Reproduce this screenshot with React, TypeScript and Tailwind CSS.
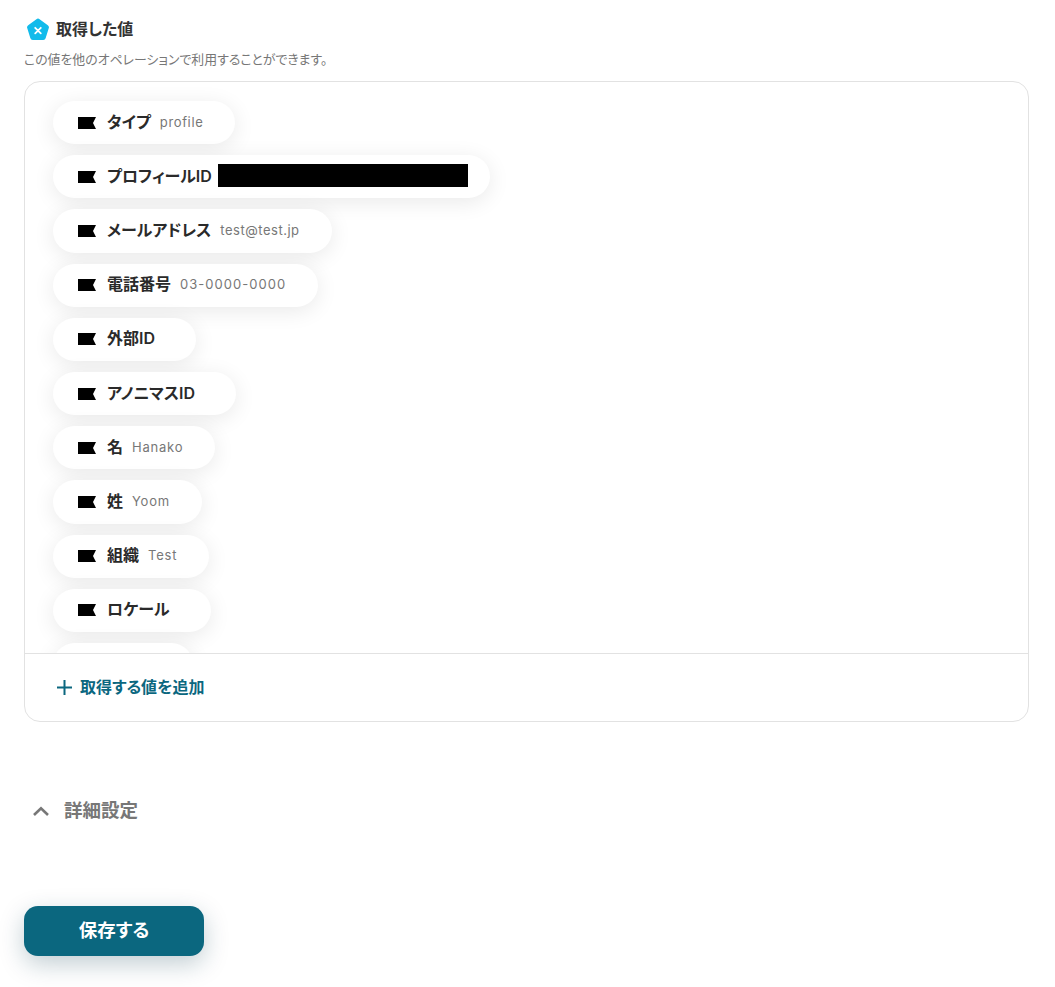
import React from 'react';

const items = [
  { label: 'タイプ', value: 'profile', track: 'tracking-[0.05em]' },
  { label: 'プロフィールID', masked: true },
  { label: 'メールアドレス', value: 'test@test.jp', track: 'tracking-[0.04em]' },
  { label: '電話番号', value: '03-0000-0000', track: 'tracking-[0.08em]' },
  { label: '外部ID' },
  { label: 'アノニマスID' },
  { label: '名', value: 'Hanako', track: 'tracking-[0.06em]' },
  { label: '姓', value: 'Yoom', track: 'tracking-[0.06em]' },
  { label: '組織', value: 'Test', track: 'tracking-[0.06em]' },
  { label: 'ロケール' },
];

const TagIcon = () => (
  <svg width="18" height="12" viewBox="0 0 18 12" className="shrink-0">
    <path d="M0 0H18L15 6L18 12H0Z" fill="#000" />
  </svg>
);

const LogoIcon = () => (
  <svg width="24" height="24" viewBox="0 0 24 24" className="shrink-0">
    <path
      d="M10.4 1.2a2.6 2.6 0 0 1 3.2 0l8.2 6a2.6 2.6 0 0 1 1 2.9l-3.1 10a2.6 2.6 0 0 1-2.5 1.9H6.8a2.6 2.6 0 0 1-2.5-1.9l-3.1-10a2.6 2.6 0 0 1 1-2.9Z"
      fill="#12bbeb"
    />
    <path d="M9.2 9.8 14.8 15.4M14.8 9.8 9.2 15.4" stroke="#fff" strokeWidth="1.8" strokeLinecap="round" />
  </svg>
);

const App = () => {
  return (
    <div className="w-[1055px] h-[987px] bg-white overflow-hidden pl-6 pr-[26px] font-['Inter','Noto_Sans_CJK_JP',sans-serif] [font-feature-settings:'palt']">
      <div className="flex items-center gap-[6px] pt-[18px] h-[42px] pl-[2px]">
        <LogoIcon />
        <h2 className="text-base font-semibold text-[#333] pb-[2px]">取得した値</h2>
      </div>
      <p className="mt-[3px] text-[12.9px] leading-[30px] h-[30px] text-[#777]">
        この値を他のオペレーションで利用することができます。
      </p>
      <div className="mt-[6px] h-[641px] border border-[#e2e2e2] rounded-2xl flex flex-col">
        <div className="h-[571px] shrink-0 overflow-hidden pl-7 pt-[19px] flex flex-col gap-[11px] items-start">
          {items.map((item) => (
            <div
              key={item.label}
              className="h-[43.2px] shrink-0 rounded-full bg-white flex items-center pl-[25px] pr-8 shadow-[0_4px_22px_rgba(0,0,0,0.09)]"
            >
              <TagIcon />
              <span className="ml-[11px] mr-[9px] pb-[2px] text-base font-semibold text-[#2a2a2a] whitespace-nowrap">
                {item.label}
              </span>
              {item.value && (
                <span className={`text-[13px] text-[#777] whitespace-nowrap ${item.track}`}>{item.value}</span>
              )}
              {item.masked && <span className="-ml-[3px] -mr-[10px] -translate-y-[1px] w-[250px] h-[23px] bg-black" />}
            </div>
          ))}
          <div className="h-[43.2px] w-[140px] shrink-0 rounded-full bg-white shadow-[0_4px_22px_rgba(0,0,0,0.09)]" />
        </div>
        <div className="flex-1 border-t border-[#e2e2e2] flex items-center pl-[32px] gap-[8px] pb-[1px]">
          <svg width="15" height="15" viewBox="0 0 15 15" className="shrink-0">
            <path d="M7.5 0V15M0 7.5H15" stroke="#0b677f" strokeWidth="2" />
          </svg>
          <span className="text-base font-semibold text-[#0b677f] pb-[1px]">取得する値を追加</span>
        </div>
      </div>
      <div className="mt-[74px] flex items-center h-[30px] pl-2">
        <svg width="18" height="12" viewBox="0 0 18 12" className="shrink-0">
          <path d="M2 10 9 3.2 16 10" fill="none" stroke="#777" strokeWidth="2.6" />
        </svg>
        <span className="ml-[14px] text-[18.5px] font-semibold text-[#777]">詳細設定</span>
      </div>
      <button className="mt-[80px] w-[180px] h-[50px] rounded-[14px] bg-[#0b677f] text-white text-[18.5px] font-semibold shadow-[0_8px_24px_rgba(11,60,80,0.25)]">
        保存する
      </button>
    </div>
  );
};

export default App;
